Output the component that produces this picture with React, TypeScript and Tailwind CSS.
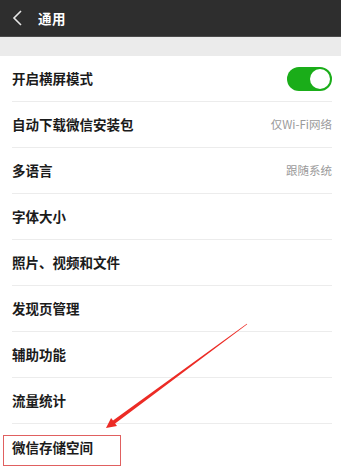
import React from 'react'

const ROWS: { label: string; value?: string; toggle?: boolean }[] = [
  { label: '开启横屏模式', toggle: true },
  { label: '自动下载微信安装包', value: '仅Wi-Fi网络' },
  { label: '多语言', value: '跟随系统' },
  { label: '字体大小' },
  { label: '照片、视频和文件' },
  { label: '发现页管理' },
  { label: '辅助功能' },
  { label: '流量统计' },
  { label: '微信存储空间' },
]

function Toggle() {
  return (
    <div className="w-[45px] h-[24px] rounded-full bg-[#1aad19] flex items-center justify-end pr-[2px]">
      <div className="w-[20px] h-[20px] rounded-full bg-white" />
    </div>
  )
}

export default function App() {
  return (
    <div
      className="relative w-[341px] h-[471px] overflow-hidden bg-white"
      style={{ fontFamily: '"Noto Sans CJK SC", "Noto Sans", sans-serif' }}
    >
      {/* Header */}
      <div className="h-[37px] bg-[#2e2e2e] border-b border-[#4a4a4a] flex items-center">
        <svg width="12" height="18" viewBox="0 0 12 18" className="ml-[11px]">
          <path d="M10 2 L3 9 L10 16" fill="none" stroke="#e6e6e6" strokeWidth="1.6" />
        </svg>
        <span className="ml-[15px] text-white text-[13.5px] font-bold tracking-[0.5px]">通用</span>
      </div>

      <div className="h-[19px] bg-[#ebebeb]" />

      {/* List */}
      <div className="ml-3 mr-[9px]">
        {ROWS.map((row, i) => (
          <div
            key={row.label}
            className={`h-[46px] flex items-center justify-between ${i < ROWS.length - 1 ? 'border-b border-[#ececec]' : ''}`}
          >
            <span className="text-[13.5px] font-semibold text-[#1b1b1b]">{row.label}</span>
            {row.toggle && <Toggle />}
            {row.value && <span className="text-[11.5px] text-[#9a9a9a]">{row.value}</span>}
          </div>
        ))}
      </div>

      {/* Annotation */}
      <div className="absolute left-[3px] top-[435px] w-[118px] h-[31px] border border-[#e06060]" />
      <svg className="absolute inset-0 pointer-events-none" width="341" height="471">
        <polygon
          points="247.2,324.2 115.1,423.5 117.0,426.1 106,428 111.1,418.0 113.0,420.6 246.8,323.8"
          fill="#ec2b25"
        />
      </svg>
    </div>
  )
}
